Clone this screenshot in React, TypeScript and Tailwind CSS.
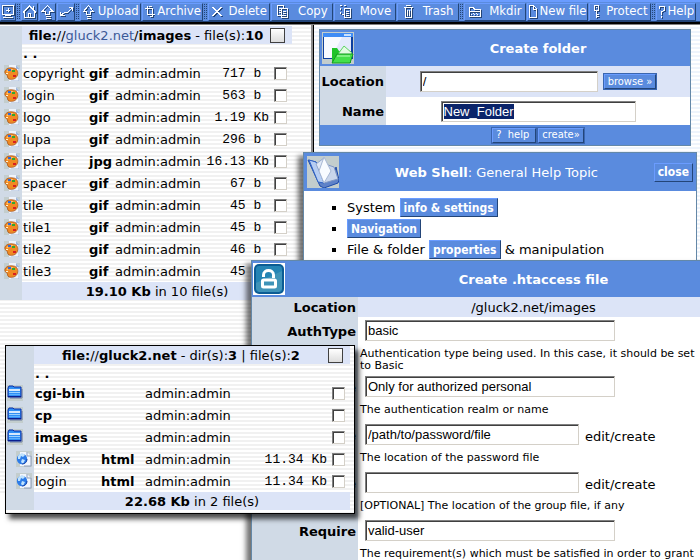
import { useEffect, useRef } from "react";
import type { ReactNode } from "react";

const BUTTON =
  "border border-t-[#6a9cff] border-l-[#6a9cff] border-b-[#234578] border-r-[#234578] bg-[#5a8bde] text-white";
const FIELD =
  "h-[21px] border border-t-[#808080] border-l-[#808080] border-b-[#d4d0c8] border-r-[#d4d0c8] bg-white px-[2px] font-['Liberation_Sans',Arial,sans-serif] text-[13px] leading-4 text-black shadow-[inset_1px_1px_0_#404040] outline-none";
const TICK =
  "block size-[13px] shrink-0 appearance-none border border-t-[#808080] border-l-[#808080] border-b-[#d4d0c8] border-r-[#d4d0c8] bg-white shadow-[inset_1px_1px_0_#404040]";
const TICK_ALL =
  "block size-[15px] shrink-0 appearance-none border border-[#404040] bg-linear-to-b from-white to-[#dddddd]";

function ToolIcon({ d, width = 15 }: { d: string; width?: number }) {
  return (
    <svg width={width} height="16" viewBox={`0 0 ${width} 16`} fill="none" shapeRendering="crispEdges" className="shrink-0" aria-hidden="true">
      <path d={d} stroke="#234578" transform="translate(1 1)" />
      <path d={d} stroke="#fff" />
    </svg>
  );
}

const ICONS = {
  monitor: "M1.5 1.5h11v9h-11zM7 4v4M5 6h4M4 11.5h6M2 13.5h10",
  home: "M1 8.5L7.5 2L14 8.5M2.5 7.5v6h10v-6M6.5 13.5v-4h2v4M11.5 2v4",
  up: "M7.5 1.5L2 7.5H5.5V10.5H9.5V7.5H13ZM5.5 12.5h5M5.5 14.5h5",
  swap: "M1.5 8v3.5h4M1.5 11.5L6 8L8 9L13.5 3.5M9.5 3.5h4V7",
  upload: "M6.5 1.5L1.5 7.5H4.5V10.5H8.5V7.5H11.5ZM4.5 12.5h4M4.5 14.5h4",
  archive: "M3.5 2v8.5h7M1 4.5h7.5V13M5 2.5h3M6 12.5h3",
  cross: "M1.5 3L10.5 12M10.5 3L1.5 12",
  copy: "M7 11.5H1.5V1.5h6V4M3 4.5h2M3 6.5h2M3 8.5h2M5.5 4.5h6v9h-6zM7 7.5h3M7 9.5h3M7 11.5h3",
  move: "M1 1.5h2M5 1.5h2M1.5 4v2M1.5 8v2M3 10.5h2M5.5 4.5h6v9h-6zM7 7.5h3M7 9.5h3M7 11.5h3",
  trash: "M2.5 4v9.5h6V4M1 3.5h9M3 1.5h5M4.5 6v6M6.5 6v6",
  folder: "M1.5 12.5v-9h4l1 2h6v7zM2 7.5h10M3 10.5h1M6 10.5h1M9 10.5h1M5 9.5h1M8 9.5h1",
  file: "M1.5 1.5h4l3 3v9h-7zM5.5 2v3h3",
  key: "M2.5 1.5h4v5h-4zM4.5 7v7M5 10.5h2M5 12.5h2M4 3.5h1",
  help: "M1.5 5V2.5h5V6L3.5 8v2.5M3.5 12v2",
};

function Grip() {
  return <span className="h-[15px] w-[3px] shrink-0 border-x border-dotted border-[#234578]" />;
}

function Tool({ icon, label, width, iconWidth = 13, hidden = false }: { icon: keyof typeof ICONS; label: string; width: string; iconWidth?: number; hidden?: boolean }) {
  return (
    <button type="button" aria-label={label} className={`${BUTTON} ${width} flex h-[18px] shrink-0 items-center justify-around overflow-hidden whitespace-nowrap text-[13px] leading-4`}>
      <ToolIcon d={ICONS[icon]} width={iconWidth} />
      {!hidden && <span className="pb-[2px]">{label}</span>}
    </button>
  );
}

function Toolbar() {
  return (
    <header className="flex h-[22px] items-center gap-px overflow-hidden border-t-2 border-t-[#6a9cff] border-b border-b-[#234578] bg-[#5a8bde] font-['DejaVu_Sans_Condensed','DejaVu_Sans',sans-serif]">
      <Tool icon="monitor" label="Console" width="w-[16px]" iconWidth={15} hidden />
      <Grip />
      <Tool icon="home" label="Home" width="w-[17px]" iconWidth={15} hidden />
      <Tool icon="up" label="Up" width="w-[17px]" iconWidth={15} hidden />
      <Tool icon="swap" label="Refresh" width="w-[18px]" iconWidth={15} hidden />
      <Grip />
      <Tool icon="upload" label="Upload" width="w-[61px]" />
      <Tool icon="archive" label="Archive" width="w-[61px]" iconWidth={11} />
      <Grip />
      <Tool icon="cross" label="Delete" width="w-[62px]" />
      <Tool icon="copy" label="Copy" width="w-[62px]" />
      <Tool icon="move" label="Move" width="w-[62px]" />
      <Tool icon="trash" label="Trash" width="w-[62px]" iconWidth={11} />
      <Grip />
      <Tool icon="folder" label="Mkdir" width="w-[62px]" iconWidth={14} />
      <Tool icon="file" label="New file" width="w-[61px]" iconWidth={10} />
      <Tool icon="key" label="Protect" width="w-[62px]" iconWidth={9} />
      <Grip />
      <Tool icon="help" label="Help" width="w-[40px]" iconWidth={8} />
    </header>
  );
}

function ImageFileIcon() {
  return (
    <svg width="16" height="16" viewBox="0 0 16 16" className="block" aria-hidden="true">
      <rect width="16" height="16" fill="#c3cdcd" />
      <path d="M5 0h7l4 4v12H5z" fill="#eef3fb" />
      <path d="M12 0l4 4h-4z" fill="#9fb8dc" />
      <path d="M15 4v12h-8" fill="none" stroke="#a9bbd9" />
      <path d="M1 8C0 5 4 2 9 3c4 0 5.500 4 4.500 7-1 4-5.500 5-8.500 4-2-1-1-3-2-4S1 9 1 8z" fill="#f08a24" stroke="#a8541a" strokeWidth="0.8" />
      <path d="M3 7c1-2 4-3 6-2" stroke="#ffc66a" strokeWidth="1.4" fill="none" />
      <rect x="4" y="4" width="3" height="2" fill="#2c6be0" />
      <rect x="8" y="5" width="3" height="2" fill="#2fa82f" />
      <rect x="9" y="10" width="3" height="2" fill="#d82020" />
      <rect x="2" y="8" width="2" height="1" fill="#fff2d0" />
    </svg>
  );
}

function HtmlFileIcon() {
  return (
    <svg width="16" height="16" viewBox="0 0 16 16" className="block" aria-hidden="true">
      <rect width="16" height="16" fill="#c3cdcd" />
      <path d="M4 1h7l4 4v10H4z" fill="#f2f6fc" />
      <path d="M11 1v4h4v10H8" fill="none" stroke="#8d9dbb" />
      <circle cx="6" cy="8" r="5.2" fill="#2d7ce8" />
      <path d="M2 5c2-3 5-3 7-1L7 6 5 5 4 8 2 8zM6 8l3 1-2 4-2-2z" fill="#bfe3ff" />
      <path d="M6 13c3 0 5-2 5-5" fill="none" stroke="#1443a8" />
    </svg>
  );
}

function FolderIcon() {
  return (
    <svg width="16" height="16" viewBox="0 0 16 16" className="block" aria-hidden="true">
      <rect width="16" height="16" fill="#c3cdcd" />
      <path d="M15 4v9H3" fill="none" stroke="#6c7a9c" />
      <path d="M1 3l1-2h4l1 1h7v10H1z" fill="#2f8ff5" stroke="#0a2fa8" />
      <path d="M2 5h11" stroke="#fff" strokeWidth="1.6" />
      <path d="M2 7.500h11" stroke="#9bd2ff" />
      <path d="M2 9.500h11" stroke="#5db2ff" />
      <path d="M1 11.500h13" stroke="#0a1f90" />
    </svg>
  );
}

type Entry = { name: string; ext?: string; size?: string; unit?: string; kind: "image" | "html" | "dir" };

function FileTable({ title, entries, footer, cols }: { title: ReactNode; entries: Entry[]; footer: ReactNode; cols: string[] }) {
  return (
    <table className="table-fixed border-collapse text-[13px] leading-4 text-black">
      <colgroup>
        {cols.map((c, i) => (
          <col key={i} className={c} />
        ))}
      </colgroup>
      <thead>
        <tr className="h-[18px] bg-[#dce4f7]">
          <td className="bg-[#d0dae6] p-0" />
          <th colSpan={5} className="p-0 font-normal">
            <span className="flex items-center pr-[7px] whitespace-nowrap">
              <span className="flex-1 pt-[2px] text-center">{title}</span>
              <input type="checkbox" aria-label="Select all" className={TICK_ALL} />
            </span>
          </th>
        </tr>
      </thead>
      <tbody>
        <tr className="h-[18px]">
          <td className="bg-[#d0dae6] p-0" />
          <td colSpan={5} className="p-0 pt-[2px] pl-px font-bold">. .</td>
        </tr>
        {entries.map((e) => (
          <tr key={e.name} className="h-[22px] whitespace-nowrap">
            <td className="bg-[#d0dae6] p-0">
              <div className={e.kind === "dir" ? "ml-px" : "flex justify-end pr-[2px]"}>
                {e.kind === "dir" ? <FolderIcon /> : e.kind === "html" ? <HtmlFileIcon /> : <ImageFileIcon />}
              </div>
            </td>
            <td className={e.kind === "dir" ? "p-0 pt-[2px] pl-px font-bold" : "p-0 pt-[2px] pl-px"}>{e.name}</td>
            <td className="p-0 pt-[2px] font-bold">{e.ext}</td>
            <td className="p-0 pt-[2px]">admin:admin</td>
            <td className="p-0 pt-[2px] text-right font-['Liberation_Mono',monospace] whitespace-pre">{e.size && `${e.size} ${(e.unit ?? "").padEnd(2)}`}</td>
            <td className="p-0">
              <input type="checkbox" aria-label={`Select ${e.name}`} className={`${TICK} mx-auto`} />
            </td>
          </tr>
        ))}
      </tbody>
      <tfoot>
        <tr className="h-[18px] bg-[#dce4f7]">
          <td className="bg-[#d0dae6] p-0" />
          <td colSpan={5} className="p-0 pt-[2px] text-center">{footer}</td>
        </tr>
      </tfoot>
    </table>
  );
}

const IMAGES: Entry[] = [
  { name: "copyright", ext: "gif", size: "717", unit: "b", kind: "image" },
  { name: "login", ext: "gif", size: "563", unit: "b", kind: "image" },
  { name: "logo", ext: "gif", size: "1.19", unit: "Kb", kind: "image" },
  { name: "lupa", ext: "gif", size: "296", unit: "b", kind: "image" },
  { name: "picher", ext: "jpg", size: "16.13", unit: "Kb", kind: "image" },
  { name: "spacer", ext: "gif", size: "67", unit: "b", kind: "image" },
  { name: "tile", ext: "gif", size: "45", unit: "b", kind: "image" },
  { name: "tile1", ext: "gif", size: "45", unit: "b", kind: "image" },
  { name: "tile2", ext: "gif", size: "46", unit: "b", kind: "image" },
  { name: "tile3", ext: "gif", size: "45", unit: "b", kind: "image" },
];

const ROOT_ENTRIES: Entry[] = [
  { name: "cgi-bin", kind: "dir" },
  { name: "cp", kind: "dir" },
  { name: "images", kind: "dir" },
  { name: "index", ext: "html", size: "11.34", unit: "Kb", kind: "html" },
  { name: "login", ext: "html", size: "11.34", unit: "Kb", kind: "html" },
];

function SmallButton({ children }: { children: ReactNode }) {
  return (
    <button type="button" className={`${BUTTON} h-[15px] shrink-0 px-[3px] font-['DejaVu_Sans_Condensed','DejaVu_Sans',sans-serif] text-[11px] leading-3 whitespace-nowrap outline outline-[#3a66b0]`}>
      {children}
    </button>
  );
}

function CreateFolder() {
  const name = useRef<HTMLInputElement>(null);
  useEffect(() => {
    name.current?.focus();
    name.current?.select();
  }, []);
  return (
    <form className="mt-1 mr-[9px] ml-[5px] border border-[#6488a8] bg-[#5a8bde] text-[13px] leading-4">
      <div className="grid grid-cols-[66px_1fr]">
        <svg width="32" height="32" viewBox="0 0 32 32" className="mt-[2px] ml-[2px]" aria-hidden="true">
          <rect width="32" height="32" fill="#c3cdcd" />
          <rect x="1" y="1" width="30" height="26" fill="#0d3f9e" />
          <rect x="1" y="1" width="30" height="4" fill="#3f8cf5" />
          <rect x="22" y="2" width="7" height="2" fill="#c9e2ff" />
          <path d="M2 5h27v21H2z" fill="#f7f9ff" />
          <path d="M20 5h9v21l-20 0z" fill="#e4eafc" />
          <path d="M10 31V16h5l2 3h12v12z" fill="#1fc32a" />
          <path d="M13 26l9-12 8 7-5 8z" fill="#e2fbe2" stroke="#5ed463" />
          <path d="M10 31l5-9h16l-3 9z" fill="#43e04a" stroke="#149a20" />
          <path d="M15 24h13" stroke="#b8ffb8" />
        </svg>
        <h2 className="flex h-[36px] items-center justify-center pt-[2px] font-bold text-white">Create folder</h2>
        <label htmlFor="location" className="flex h-[31px] items-center justify-end bg-[#d0dae6] pr-[2px] font-bold">Location</label>
        <div className="flex items-center justify-center gap-[6px] bg-[#dce4f7]">
          <input id="location" defaultValue="/" className={`${FIELD} w-[178px]`} />
          <SmallButton>browse »</SmallButton>
        </div>
        <label htmlFor="name" className="flex h-[28px] items-center justify-end bg-[#d0dae6] pt-[2px] pr-[2px] font-bold">Name</label>
        <div className="flex items-center justify-center bg-white">
          <input id="name" ref={name} defaultValue="New_Folder" className={`${FIELD} w-[195px] selection:bg-[#0a246a] selection:text-white`} />
        </div>
      </div>
      <div className="flex h-[20px] items-center justify-center gap-[2px] pl-[66px]">
        <SmallButton>?&nbsp; help&nbsp;</SmallButton>
        <SmallButton>create»</SmallButton>
      </div>
    </form>
  );
}

function LinkButton({ children }: { children: ReactNode }) {
  return (
    <button type="button" className={`${BUTTON} h-[19px] px-[3px] font-['DejaVu_Sans_Condensed','DejaVu_Sans',sans-serif] text-xs leading-4 font-bold whitespace-nowrap`}>
      {children}
    </button>
  );
}

function HelpTopic() {
  return (
    <section className="absolute top-[152px] right-[3px] left-[303px] h-[160px] border border-[#6488a8] bg-white text-[13px] leading-4 shadow-[-5px_4px_5px_rgba(0,0,0,0.55)]">
      <header className="flex h-[38px] items-center justify-between bg-[#5a8bde] pr-[3px] pl-[3px] text-white">
        <svg width="32" height="32" viewBox="0 0 32 32" aria-hidden="true">
          <rect width="32" height="32" fill="#c3cdcd" />
          <path d="M1 4l8 2 7 20 10-2 3-13 3 13-1 3-14 5-4-2z" fill="#5f82c8" stroke="#1d49a8" />
          <path d="M2 4l7 2 8 21-6-1z" fill="#b6cdf2" stroke="#2e62c4" />
          <path d="M9 8l8-6 1 14-1 10z" fill="#dfe8f6" stroke="#94a8cc" />
          <path d="M18 8l9 3 4 12-14 4z" fill="#c9d5ea" stroke="#8097c4" />
          <path d="M17 1l7 14-7 12-5-12z" fill="#f8fbff" stroke="#a8b8d4" />
        </svg>
        <h2 className="pt-[2px]"><b>Web Shell</b>: General Help Topic</h2>
        <LinkButton>close</LinkButton>
      </header>
      <ul className="list-[square] pt-[7px] pl-[43px]">
        <li className="h-[21px]">System <LinkButton>info &amp; settings</LinkButton></li>
        <li className="h-[21px]"><LinkButton>Navigation</LinkButton></li>
        <li className="h-[21px]">File &amp; folder <LinkButton>properties</LinkButton> &amp; manipulation</li>
      </ul>
    </section>
  );
}

function Setting({ id, label, value, caption, link = false, tall = false }: { id: string; label: string; value: string; caption: string; link?: boolean; tall?: boolean }) {
  return (
    <>
      <label htmlFor={id} className="bg-[#d0dae6] pt-[7px] pr-[2px] text-right font-bold">{label}</label>
      <div className={tall ? "h-[56px] pt-[3px]" : "h-[48px] pt-[3px]"}>
        <div className="flex items-center gap-[6px] pl-[7px]">
          <input id={id} defaultValue={value} className={`${FIELD} ${link ? "w-[214px]" : "w-[250px]"}`} />
          {link && <a href="#edit" className="pt-[5px]">edit/create</a>}
        </div>
        <p className="pt-[7px] pr-[9px] pl-[2px] text-[11px] leading-3">{caption}</p>
      </div>
    </>
  );
}

function Htaccess() {
  return (
    <form className="absolute top-[260px] -right-[10px] left-[251px] border border-[#6488a8] bg-white text-[13px] leading-4 shadow-[-5px_4px_5px_rgba(0,0,0,0.55)]">
      <div className="grid grid-cols-[106px_1fr]">
        <div className="bg-[#5a8bde] pt-[2px] pl-px">
          <svg width="32" height="32" viewBox="0 0 32 32" aria-hidden="true">
            <rect width="32" height="32" fill="#fff" />
            <rect x="1" y="1" width="30" height="30" rx="5" fill="#0b5c94" />
            <rect x="3" y="3" width="26" height="26" rx="3" fill="#2484b4" />
            <path d="M3 20L29 8v18l-3 3H6l-3-3z" fill="#3f93b8" />
            <path d="M10.500 14v-2c0-6 10-6 10 0v3" fill="none" stroke="#fff" strokeWidth="3" />
            <rect x="9.500" y="17" width="13" height="7" rx="1" fill="none" stroke="#fff" strokeWidth="3" />
          </svg>
        </div>
        <h2 className="flex h-[36px] items-center justify-center bg-[#5a8bde] pt-[2px] font-bold text-white">Create .htaccess file</h2>
        <div className="flex h-[20px] items-center justify-end bg-[#d0dae6] pt-[2px] pr-[2px] font-bold">Location</div>
        <div className="flex items-center justify-center bg-[#dce4f7] pt-[2px]">/gluck2.net/images</div>
        <Setting id="authtype" label="AuthType" value="basic" caption="Authentication type being used. In this case, it should be set to Basic" tall />
        <Setting id="authname" label="AuthName" value="Only for authorized personal" caption="The authentication realm or name" />
        <Setting id="userfile" label="UserFile" value="/path/to/password/file" caption="The location of the password file" link />
        <Setting id="groupfile" label="GroupFile" value="" caption="[OPTIONAL] The location of the group file, if any" link />
        <Setting id="require" label="Require" value="valid-user" caption="The requirement(s) which must be satisfied in order to grant" />
      </div>
    </form>
  );
}

export default function App() {
  return (
    <div className="relative h-screen overflow-hidden bg-white font-['DejaVu_Sans',Verdana,sans-serif] text-black">
      <Toolbar />
      <div className="h-[2px] bg-black" />
      <main className="flex border-t border-[#808080]">
        <div className="h-[469px] w-[313px] shrink-0 border-r-2 border-r-[#8c8c8c] bg-[repeating-linear-gradient(to_bottom,#ffffff_0px,#ffffff_2px,#f1f1f1_2px,#f1f1f1_4px)] pt-px">
          <FileTable
            title={<><b>file:</b>//<a href="#root" className="text-[#3b5998]">gluck2.net</a>/<b>images</b> - file(s):<b>10</b></>}
            entries={IMAGES}
            footer={<><b>19.10 Kb</b> in 10 file(s)</>}
            cols={["w-[22px]", "w-[67px]", "w-[26px]", "w-[88px]", "w-[66px]", "w-[23px]"]}
          />
        </div>
        <div className="min-w-0 flex-1 border-l border-black bg-[repeating-linear-gradient(to_bottom,#ffffff_0px,#ffffff_2px,#eef4fc_2px,#eef4fc_4px)]">
          <CreateFolder />
        </div>
      </main>
      <HelpTopic />
      <Htaccess />
      <section className="absolute top-[345px] left-[5px] border border-black bg-[repeating-linear-gradient(to_bottom,#ffffff_0px,#ffffff_2px,#f1f1f1_2px,#f1f1f1_4px)] pr-1 pb-[3px] shadow-[4px_5px_5px_rgba(0,0,0,0.7)]">
        <FileTable
          title={<><b>file:</b>//<b>gluck2.net</b> - dir(s):<b>3</b> | file(s):<b>2</b></>}
          entries={ROOT_ENTRIES}
          footer={<><b>22.68 Kb</b> in 2 file(s)</>}
          cols={["w-[28px]", "w-[67px]", "w-[44px]", "w-[94px]", "w-[88px]", "w-[23px]"]}
        />
      </section>
    </div>
  );
}
